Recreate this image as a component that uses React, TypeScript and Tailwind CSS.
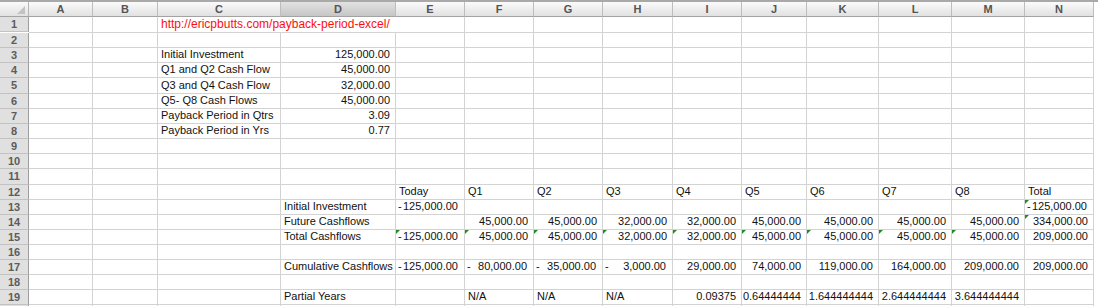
import React from "react";

type Cell = {
  v: string;
  align?: "l" | "r";
  acct?: boolean; // accounting negative: minus at the left, figure on the right
  tri?: boolean; // green error marker
  red?: boolean;
  span?: number;
};

const columns = [
  { l: "A", w: 64 },
  { l: "B", w: 65 },
  { l: "C", w: 123 },
  { l: "D", w: 115 },
  { l: "E", w: 69 },
  { l: "F", w: 69 },
  { l: "G", w: 69 },
  { l: "H", w: 70 },
  { l: "I", w: 69 },
  { l: "J", w: 65 },
  { l: "K", w: 72 },
  { l: "L", w: 73 },
  { l: "M", w: 73 },
  { l: "N", w: 69 },
];

const L = (v: string): Cell => ({ v, align: "l" });
const R = (v: string, tri = false): Cell => ({ v, align: "r", tri });
const NEG = (v: string, tri = false): Cell => ({ v, acct: true, tri });

const cells: Record<string, Cell> = {
  C1: { v: "http://ericpbutts.com/payback-period-excel/", align: "l", red: true, span: 3 },
  C3: L("Initial Investment"),
  D3: R("125,000.00"),
  C4: L("Q1 and Q2 Cash Flow"),
  D4: R("45,000.00"),
  C5: L("Q3 and Q4 Cash Flow"),
  D5: R("32,000.00"),
  C6: L("Q5- Q8 Cash Flows"),
  D6: R("45,000.00"),
  C7: L("Payback Period in Qtrs"),
  D7: R("3.09"),
  C8: L("Payback Period in Yrs"),
  D8: R("0.77"),

  E12: L("Today"),
  F12: L("Q1"),
  G12: L("Q2"),
  H12: L("Q3"),
  I12: L("Q4"),
  J12: L("Q5"),
  K12: L("Q6"),
  L12: L("Q7"),
  M12: L("Q8"),
  N12: L("Total"),

  D13: L("Initial Investment"),
  E13: NEG("125,000.00"),
  N13: NEG("125,000.00", true),

  D14: L("Future Cashflows"),
  F14: R("45,000.00"),
  G14: R("45,000.00"),
  H14: R("32,000.00"),
  I14: R("32,000.00"),
  J14: R("45,000.00"),
  K14: R("45,000.00"),
  L14: R("45,000.00"),
  M14: R("45,000.00"),
  N14: R("334,000.00", true),

  D15: L("Total Cashflows"),
  E15: NEG("125,000.00", true),
  F15: R("45,000.00", true),
  G15: R("45,000.00", true),
  H15: R("32,000.00", true),
  I15: R("32,000.00", true),
  J15: R("45,000.00", true),
  K15: R("45,000.00", true),
  L15: R("45,000.00", true),
  M15: R("45,000.00", true),
  N15: R("209,000.00"),

  D17: L("Cumulative Cashflows"),
  E17: NEG("125,000.00"),
  F17: NEG("80,000.00"),
  G17: NEG("35,000.00"),
  H17: NEG("3,000.00"),
  I17: R("29,000.00"),
  J17: R("74,000.00"),
  K17: R("119,000.00"),
  L17: R("164,000.00"),
  M17: R("209,000.00"),
  N17: R("209,000.00"),

  D19: L("Partial Years"),
  F19: L("N/A"),
  G19: L("N/A"),
  H19: L("N/A"),
  I19: R("0.09375"),
  J19: R("0.64444444"),
  K19: R("1.644444444"),
  L19: R("2.644444444"),
  M19: R("3.644444444"),
};

const rows = Array.from({ length: 20 }, (_, i) => i + 1);
const tallRows = new Set([5, 11]);

function Marker() {
  return (
    <span className="absolute left-0 top-0 h-0 w-0 border-t-[4px] border-r-[4px] border-t-[#1e8c22] border-r-transparent" />
  );
}

function CellBox({ cell }: { cell?: Cell }) {
  const span = cell?.span ?? 1;
  return (
    <div
      className={`relative flex items-end overflow-visible whitespace-nowrap border-r border-b border-[#d3d3d3] bg-white pb-[1px] ${
        span === 3 ? "col-span-3" : ""
      } ${cell?.align === "r" ? "justify-end pr-[5px]" : "pl-[3px]"}`}
    >
      {cell?.tri && <Marker />}
      {cell &&
        (cell.acct ? (
          <span className="-ml-[1px] flex w-full justify-between pr-[5px] text-[11px] leading-[13px] text-[#111]">
            <span>-</span>
            <span>{cell.v}</span>
          </span>
        ) : (
          <span
            className={
              cell.red
                ? "text-[12px] leading-[14px] text-[#ff0d0d]"
                : "text-[11px] leading-[13px] text-[#111]"
            }
          >
            {cell.v}
          </span>
        ))}
    </div>
  );
}

export default function App() {
  return (
    <div className="h-[306px] w-[1098px] overflow-hidden bg-white font-['Liberation_Sans',Arial,sans-serif]">
      <div className="h-[2px] bg-[#a9a9a9]" />
      <div className="grid grid-cols-[29px_64px_65px_123px_115px_69px_69px_69px_70px_69px_65px_72px_73px_73px_69px]">
        {/* corner */}
        <div className="relative h-[15px] border-r border-b border-r-[#b5b5b5] border-b-[#a3a3a3] bg-gradient-to-b from-[#fbfbfb] to-[#e1e1e1]">
          <svg className="absolute right-[3px] bottom-[2px]" width="8" height="8" viewBox="0 0 8 8">
            <path d="M8 0 L8 8 L0 8 Z" fill="#c2c2c2" />
          </svg>
        </div>
        {/* column letters */}
        {columns.map((c) => (
          <div
            key={c.l}
            className={`flex h-[15px] items-center justify-center border-r border-b border-r-[#bdbdbd] border-b-[#a3a3a3] text-[11px] font-bold text-[#555] bg-gradient-to-b ${
              c.l === "D" ? "from-[#e2e2e2] to-[#c6c6c6]" : "from-[#fbfbfb] to-[#e1e1e1]"
            }`}
          >
            {c.l}
          </div>
        ))}

        {rows.map((r) => {
          const h = tallRows.has(r) ? "h-[16px]" : "h-[15px]";
          const out: React.ReactNode[] = [
            <div
              key={`h${r}`}
              className={`flex ${h} items-center justify-center border-r border-b border-r-[#9d9d9d] border-b-[#c2c2c2] bg-[#e0e0e0] text-[11px] font-bold text-[#5c5c5c]`}
            >
              {r < 20 ? r : ""}
            </div>,
          ];
          let skip = 0;
          columns.forEach((c) => {
            if (skip > 0) {
              skip--;
              return;
            }
            const id = `${c.l}${r}`;
            const cell = cells[id];
            if (cell?.span) skip = cell.span - 1;
            out.push(<CellBox key={id} cell={cell} />);
          });
          return out;
        })}
      </div>
    </div>
  );
}
